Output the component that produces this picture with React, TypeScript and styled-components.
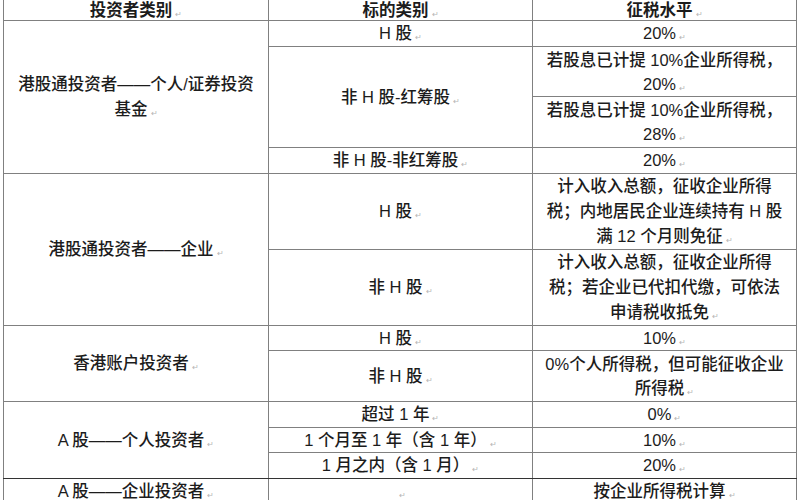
import React from "react";
import styled, { createGlobalStyle } from "styled-components";

const Global = createGlobalStyle`
  html, body {
    margin: 0;
    padding: 0;
    background: #ffffff;
    overflow: hidden;
  }
  body {
    font-family: "Liberation Sans", "Noto Sans CJK SC", sans-serif;
    color: #1c1c1c;
  }
`;

const Page = styled.div`
  width: 800px;
  height: 500px;
  overflow: hidden;
  padding-left: 3px;
  box-sizing: border-box;
`;

const Table = styled.table`
  margin-top: -2px;
  width: 793px;
  border-collapse: collapse;
  table-layout: fixed;
  font-size: 16.5px;
  line-height: 25px;
`;

const Row = styled.tr<{ $h: number }>`
  height: ${(p) => p.$h}px;
`;

const Cell = styled.td<{ $heavyBottom?: boolean; $lh?: number }>`
  border: 1px solid #808080;
  ${(p) => (p.$heavyBottom ? "border-bottom-color: #333;" : "")}
  padding: 0;
  text-align: center;
  vertical-align: middle;
  white-space: nowrap;
  font-weight: 500;
  line-height: ${(p) => p.$lh ?? 25}px;
  color: #1c1c1c;
`;

const HeadCell = styled.th`
  border: 1px solid #808080;
  padding: 0;
  text-align: center;
  vertical-align: middle;
  white-space: nowrap;
  font-weight: 700;
  line-height: 20px;
  color: #1c1c1c;
`;

const Mark = styled.span`
  display: inline-block;
  font-size: 8px;
  line-height: 8px;
  font-weight: 400;
  color: #b5b5b5;
  margin-left: 3px;
  vertical-align: -1px;
`;

const Lines: React.FC<{ text: string }> = ({ text }) => {
  const parts = text.split("\n");
  return (
    <>
      {parts.map((p, i) => (
        <React.Fragment key={i}>
          {p}
          {i < parts.length - 1 ? <br /> : <Mark>↵</Mark>}
        </React.Fragment>
      ))}
    </>
  );
};

export default function App() {
  return (
    <Page>
      <Global />
      <Table>
        <colgroup>
          <col style={{ width: "265px" }} />
          <col style={{ width: "264px" }} />
          <col style={{ width: "264px" }} />
        </colgroup>
        <thead>
          <Row $h={22}>
            <HeadCell><Lines text="投资者类别" /></HeadCell>
            <HeadCell><Lines text="标的类别" /></HeadCell>
            <HeadCell><Lines text="征税水平" /></HeadCell>
          </Row>
        </thead>
        <tbody>
          <Row $h={26}>
            <Cell rowSpan={4}><Lines text={"港股通投资者——个人/证券投资\n基金"} /></Cell>
            <Cell $lh={23}><Lines text="H 股" /></Cell>
            <Cell $lh={23}><Lines text="20%" /></Cell>
          </Row>
          <Row $h={50}>
            <Cell rowSpan={2}><Lines text="非 H 股-红筹股" /></Cell>
            <Cell $lh={24}><Lines text={"若股息已计提 10%企业所得税，\n20%"} /></Cell>
          </Row>
          <Row $h={51}>
            <Cell $lh={24}><Lines text={"若股息已计提 10%企业所得税，\n28%"} /></Cell>
          </Row>
          <Row $h={26}>
            <Cell $lh={23}><Lines text="非 H 股-非红筹股" /></Cell>
            <Cell $lh={23}><Lines text="20%" /></Cell>
          </Row>
          <Row $h={76}>
            <Cell rowSpan={2}><Lines text="港股通投资者——企业" /></Cell>
            <Cell><Lines text="H 股" /></Cell>
            <Cell><Lines text={"计入收入总额，征收企业所得\n税；内地居民企业连续持有 H 股\n满 12 个月则免征"} /></Cell>
          </Row>
          <Row $h={76}>
            <Cell><Lines text="非 H 股" /></Cell>
            <Cell><Lines text={"计入收入总额，征收企业所得\n税；若企业已代扣代缴，可依法\n申请税收抵免"} /></Cell>
          </Row>
          <Row $h={25}>
            <Cell rowSpan={2}><Lines text="香港账户投资者" /></Cell>
            <Cell $lh={22}><Lines text="H 股" /></Cell>
            <Cell $lh={22}><Lines text="10%" /></Cell>
          </Row>
          <Row $h={51}>
            <Cell $lh={24}><Lines text="非 H 股" /></Cell>
            <Cell $lh={24}><Lines text={"0%个人所得税，但可能征收企业\n所得税"} /></Cell>
          </Row>
          <Row $h={26}>
            <Cell rowSpan={3} $heavyBottom><Lines text="A 股——个人投资者" /></Cell>
            <Cell $lh={23}><Lines text="超过 1 年" /></Cell>
            <Cell $lh={23}><Lines text="0%" /></Cell>
          </Row>
          <Row $h={25}>
            <Cell $lh={22}><Lines text="1 个月至 1 年（含 1 年）" /></Cell>
            <Cell $lh={22}><Lines text="10%" /></Cell>
          </Row>
          <Row $h={26}>
            <Cell $heavyBottom $lh={23}><Lines text="1 月之内（含 1 月）" /></Cell>
            <Cell $heavyBottom $lh={23}><Lines text="20%" /></Cell>
          </Row>
          <Row $h={26}>
            <Cell $lh={23}><Lines text="A 股——企业投资者" /></Cell>
            <Cell $lh={23}><Lines text="" /></Cell>
            <Cell $lh={23}><Lines text="按企业所得税计算" /></Cell>
          </Row>
        </tbody>
      </Table>
    </Page>
  );
}
